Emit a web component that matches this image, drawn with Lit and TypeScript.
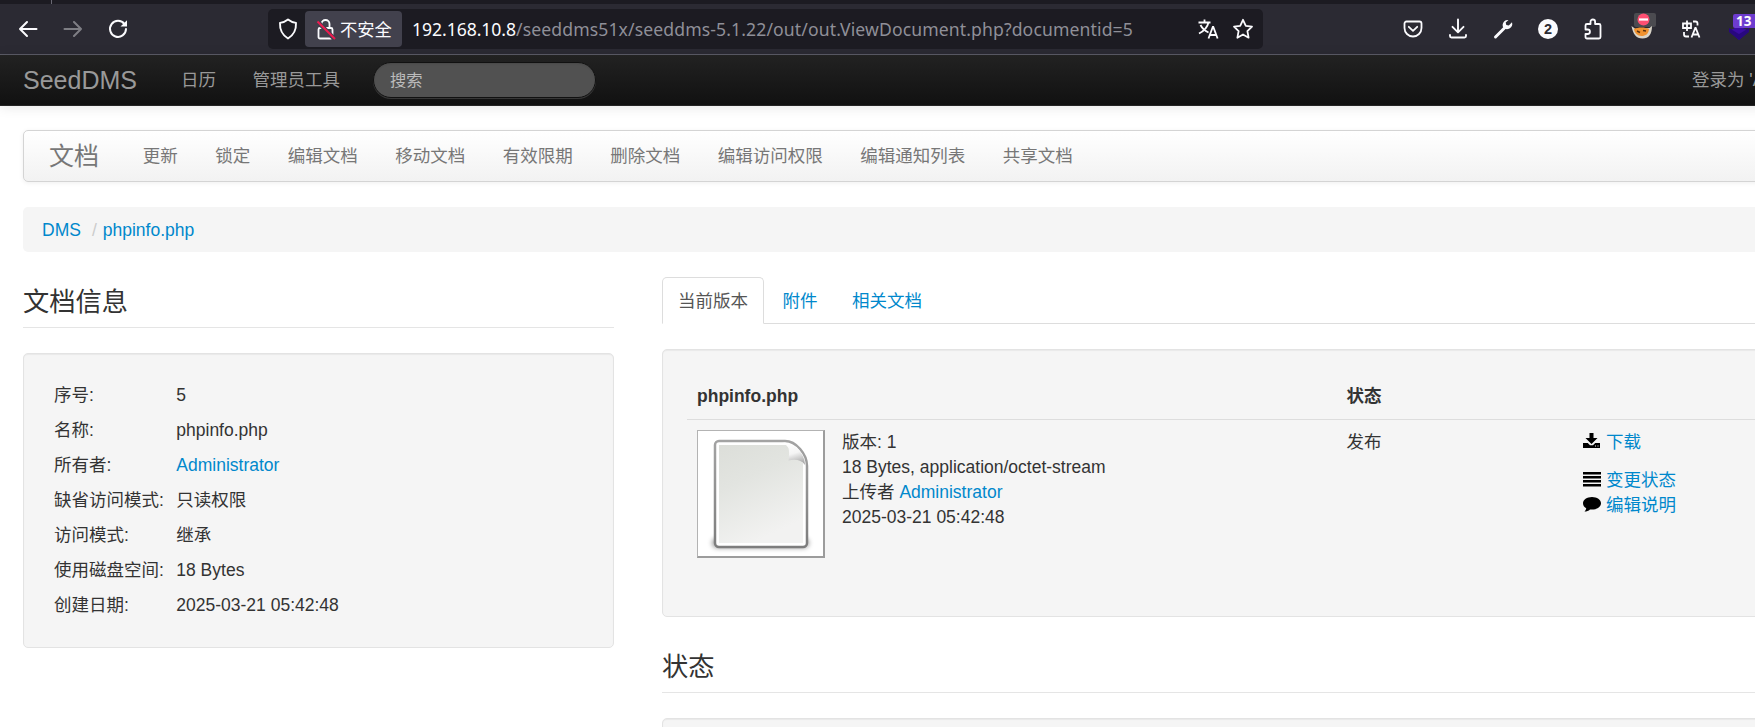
import { LitElement, html, css, svg } from "lit";
import { customElement } from "lit/decorators.js";

const baseFont = css`
  :host { display: block; font-family: "Liberation Sans", "Noto Sans CJK SC", sans-serif; font-size: 17.5px; line-height: 25px; color: #333; }
  * { box-sizing: border-box; }
  a { color: #0088cc; text-decoration: none; }
  svg { display: block; }
`;

@customElement("browser-bar")
class BrowserBar extends LitElement {
  static styles = [baseFont, css`
    :host { font-family: "Noto Sans", "Noto Sans CJK SC", sans-serif; color: #fbfbfe; }
    .tabs { height: 4px; background: #1c1b22; display: flex; }
    .sep { width: 1px; height: 4px; margin-left: 51px; background: #6a6974; }
    .bar { height: 51px; background: #2b2a33; border-bottom: 1px solid #5b5b66; display: flex; align-items: center; width: 1800px; }
    .nav { width: 268px; display: flex; align-items: center; gap: 21px; padding-left: 16px; }
    .dim { opacity: .4; }
    .url { width: 995px; height: 40px; border-radius: 5px; background: #1c1b22; display: flex; align-items: center; padding-left: 8px; }
    .chip { height: 36px; width: 97px; background: #42414d; border-radius: 4px; margin-left: 5px; display: flex; align-items: center; padding-left: 9px; gap: 1px; font-size: 17.3px; }
    .addr { margin-left: 10px; width: 777px; font-size: 17.6px; letter-spacing: .115px; color: #8f8f98; white-space: nowrap; }
    .host { color: #fbfbfe; letter-spacing: -.06px; }
    .end { display: flex; gap: 11px; margin-left: 7px; }
    .tools { margin-left: 138px; display: flex; align-items: center; gap: 21px; height: 50px; }
    .cat { margin-left: 2px; }
    .lang { margin-left: 2px; }
    .stack { margin-left: 2px; }
  `];
  render() {
    return html`
      <div class="tabs"><div class="sep"></div></div>
      <div class="bar">
        <div class="nav">
          <svg width="24" height="24" viewBox="0 0 24 24" fill="none" stroke="#fbfbfe" stroke-width="2" stroke-linecap="round" stroke-linejoin="round"><path d="M20.500 12H4M11 5l-7 7 7 7"/></svg>
          <svg class="dim" width="24" height="24" viewBox="0 0 24 24" fill="none" stroke="#fbfbfe" stroke-width="2" stroke-linecap="round" stroke-linejoin="round"><path d="M3.500 12H20M13 5l7 7-7 7"/></svg>
          <svg width="24" height="24" viewBox="0 0 24 24"><path d="M18.500 7.200A8 8 0 1 0 20 12" fill="none" stroke="#fbfbfe" stroke-width="2" stroke-linecap="round"/><path d="M21 3.200v6.300h-6.500z" fill="#fbfbfe"/></svg>
        </div>
        <div class="url">
          <svg width="24" height="24" viewBox="0 0 24 24" fill="none" stroke="#fbfbfe" stroke-width="1.900" stroke-linejoin="round"><path d="M12 2.500c2.500 2 5 3 8 3.400.3 6.600-2 12-8 15.600C6 17.900 3.700 12.500 4 5.900c3-.4 5.500-1.400 8-3.400z"/></svg>
          <div class="chip">
            <svg width="25" height="24" viewBox="0 0 25 24" fill="none"><path d="M6 11h11a1.500 1.500 0 0 1 1.500 1.500v7.500a1.500 1.500 0 0 1-1.500 1.500H6A1.500 1.500 0 0 1 4.500 20v-7.500A1.500 1.500 0 0 1 6 11z" stroke="#fbfbfe" stroke-width="1.800"/><path d="M7.500 11V7a4 4 0 0 1 8 0v4" stroke="#fbfbfe" stroke-width="1.800"/><path d="M3.500 4.500l17.500 18" stroke="#42414d" stroke-width="4.500"/><path d="M3.500 4.500l17.500 17.500" stroke="#ef1a50" stroke-width="2"/></svg>
            <span>不安全</span>
          </div>
          <div class="addr"><span class="host">192.168.10.8</span>/seeddms51x/seeddms-5.1.22/out/out.ViewDocument.php?documentid=5</div>
          <div class="end">
            <svg width="24" height="24" viewBox="0 0 24 24" fill="none" stroke="#fbfbfe" stroke-width="1.800"><path d="M2.500 5.500h12M8.500 2.500v3M4.500 8c2 4 5 6 8 7.500M12.500 5.500C11.500 10 8 14 3 16.500M12.500 21.500l4.300-11.500h.5l4.300 11.500M14 18h6"/></svg>
            <svg width="24" height="24" viewBox="0 0 24 24" fill="none" stroke="#fbfbfe" stroke-width="1.800" stroke-linejoin="round"><path d="M12 2.800l2.800 6 6.200.8-4.600 4.500 1.200 6.600L12 17.500l-5.600 3.200 1.200-6.600L3 9.600l6.200-.8z"/></svg>
          </div>
        </div>
        <div class="tools">
          <svg width="24" height="24" viewBox="0 0 24 24" fill="none" stroke="#fbfbfe" stroke-width="1.800" stroke-linecap="round" stroke-linejoin="round"><path d="M5.500 4.500h13a2 2 0 0 1 2 2V11a8.500 8.500 0 0 1-17 0V6.500a2 2 0 0 1 2-2zM7.800 9.800l4.200 4 4.200-4"/></svg>
          <svg width="24" height="24" viewBox="0 0 24 24" fill="none" stroke="#fbfbfe" stroke-width="1.900" stroke-linecap="round" stroke-linejoin="round"><path d="M12 2.500v12.500M6.500 9.800l5.500 5.500 5.500-5.500M4 18v1a1.500 1.500 0 0 0 1.500 1.500h13a1.500 1.500 0 0 0 1.500-1.500V18"/></svg>
          <svg width="24" height="24" viewBox="0 0 24 24"><path d="M4.500 20L14 10.500" stroke="#fbfbfe" stroke-width="3" stroke-linecap="round"/><path d="M17.500 3a5.200 5.200 0 0 0-5.500 7.100 5.200 5.200 0 0 0 9-4.800l-3.200 3.200-2.500-.6-.6-2.300z" fill="#fbfbfe"/></svg>
          <svg width="24" height="24" viewBox="0 0 24 24"><circle cx="12" cy="12" r="10" fill="#fbfbfe"/><text x="12" y="17" text-anchor="middle" font-size="14.500" font-weight="700" font-family="Liberation Sans" fill="#2b2a33">2</text></svg>
          <svg width="24" height="24" viewBox="0 0 24 24" fill="none" stroke="#fbfbfe" stroke-width="1.800" stroke-linejoin="round"><path d="M4.500 10.500V8.500A1.500 1.500 0 0 1 6 7h3.500V4.800a2.300 2.300 0 0 1 4.600 0V7H18a1.500 1.500 0 0 1 1.500 1.500V20a1.500 1.500 0 0 1-1.500 1.500H6A1.500 1.500 0 0 1 4.500 20v-3h2.200a2.200 2.200 0 0 0 0-4.500H4.500z"/></svg>
          <svg class="cat" width="28" height="32" viewBox="0 0 28 32"><rect x="6" y="0" width="22" height="14" rx="2" fill="#4b4b50"/><path d="M3.500 13l4 3 14-1 2.500-2c0 8-3 12.500-9.500 12.500S5 21 3.500 13z" fill="#d9d4c8"/><path d="M6 16c4-2 11-2 15 0-.5 5-3.500 7-7.500 7S6.500 20 6 16z" fill="#f0922f"/><path d="M9 18l3 1.500M15 17.500l3 .5" stroke="#5a3210" stroke-width="1.500"/><circle cx="15.500" cy="6.500" r="6" fill="#ff4f72"/><rect x="11" y="5.400" width="9" height="2.200" fill="#fff"/></svg>
          <svg class="lang" width="24" height="24" viewBox="0 0 24 24" fill="none" stroke="#fbfbfe" stroke-width="1.800"><path d="M4 6.500h8v4.500H4zM8 3.500v10.500M14 4.500h2.500a2 2 0 0 1 2 2V8.500M5 15v2.500a2 2 0 0 0 2 2h3M12.500 20.500l3.800-9.500h.4l3.800 9.500M14 17.500h5"/></svg>
          <svg class="stack" width="32" height="40" viewBox="0 0 32 40"><path d="M3 22l10-5 10 5-10 9z" fill="#3a0ca3"/><path d="M3 19l10 6 10-6v4l-10 8-10-8z" fill="#28087f"/><rect x="7" y="5" width="25" height="14" rx="2" fill="#6d3ccf"/><text x="10" y="17" font-size="13.500" font-weight="700" font-family="Noto Sans" fill="#fff">13</text></svg>
        </div>
      </div>`;
  }
}

@customElement("site-nav")
class SiteNav extends LitElement {
  static styles = [baseFont, css`
    .bar { height: 51px; width: 1900px; background: linear-gradient(#222, #111); border-bottom: 1px solid #252525; box-shadow: 0 1px 12px rgba(0,0,0,.1); display: flex; align-items: center; color: #999; }
    .brand { width: 158px; padding-left: 23px; font-size: 25px; }
    .item { margin-left: 23px; margin-right: 13.500px; }
    .search { margin-left: 19px; width: 223px; height: 36px; border-radius: 18px; background: #515151; border: 1px solid #111; box-shadow: inset 0 1px 2px rgba(0,0,0,.1), 0 1px 0 rgba(255,255,255,.15); padding: 5px 16.500px; font-size: 16.250px; color: #bbb; }
    .user { margin-left: 1096.500px; white-space: nowrap; }
  `];
  render() {
    return html`<div class="bar">
      <div class="brand">SeedDMS</div>
      <div class="item">日历</div>
      <div class="item">管理员工具</div>
      <div class="search">搜索</div>
      <div class="user">登录为 'Administrator'</div>
    </div>`;
  }
}

@customElement("document-menu")
class DocumentMenu extends LitElement {
  static styles = [baseFont, css`
    .bar { height: 52px; border: 1px solid #d4d4d4; border-radius: 5px; background: linear-gradient(#fff, #f2f2f2); box-shadow: 0 1px 5px rgba(0,0,0,.065); display: flex; align-items: center; color: #777; white-space: nowrap; }
    .brand { font-size: 25px; padding: 0 25px; }
    .item { padding: 0 18.750px; }
  `];
  items = ["更新", "锁定", "编辑文档", "移动文档", "有效限期", "删除文档", "编辑访问权限", "编辑通知列表", "共享文档"];
  render() {
    return html`<div class="bar"><div class="brand">文档</div>${this.items.map(i => html`<div class="item">${i}</div>`)}</div>`;
  }
}

@customElement("document-info")
class DocumentInfo extends LitElement {
  static styles = [baseFont, css`
    .legend { height: 51px; border-bottom: 1px solid #e5e5e5; font-size: 26.250px; line-height: 51px; }
    .well { margin-top: 25px; background: #f5f5f5; border: 1px solid #e3e3e3; border-radius: 5px; box-shadow: inset 0 1px 1px rgba(0,0,0,.05); padding: 24px 25px; height: 295px; }
    .row { display: grid; grid-template-columns: 122.300px 1fr; padding: 5px; }
  `];
  rows = [["序号:", "5"], ["名称:", "phpinfo.php"], ["所有者:", html`<a>Administrator</a>`], ["缺省访问模式:", "只读权限"], ["访问模式:", "继承"], ["使用磁盘空间:", "18 Bytes"], ["创建日期:", "2025-03-21 05:42:48"]];
  render() {
    return html`<div class="legend">文档信息</div>
      <div class="well">${this.rows.map(r => html`<div class="row"><span>${r[0]}</span><span>${r[1]}</span></div>`)}</div>`;
  }
}

const page = svg`
  <defs>
    <linearGradient id="sheet" x1="0" y1="0" x2=".4" y2="1"><stop offset="0" stop-color="#dcded9"/><stop offset=".4" stop-color="#e2e4e0"/><stop offset="1" stop-color="#f2f2f1"/></linearGradient>
    <linearGradient id="edge" x1="0" y1="0" x2="0" y2="1"><stop offset="0" stop-color="#a3a3a3"/><stop offset="1" stop-color="#7d7d7d"/></linearGradient>
    <linearGradient id="curl" x1=".3" y1="0" x2=".6" y2="1"><stop offset="0" stop-color="#fff"/><stop offset=".5" stop-color="#f4f4f4"/><stop offset="1" stop-color="#a8a8a8"/></linearGradient>
    <filter id="soft" x="-20%" y="-100%" width="140%" height="300%"><feGaussianBlur stdDeviation="2.500"/></filter>
  </defs>
  <rect x="14" y="107" width="97" height="10" rx="5" fill="#000" opacity=".4" filter="url(#soft)"/>
  <path d="M21 10H87C98 10 109 23 109 35V112a4 4 0 0 1-4 4H21a4 4 0 0 1-4-4V14a4 4 0 0 1 4-4z" fill="#fff" stroke="url(#edge)" stroke-width="2.500"/>
  <path d="M21 14H88l17 18V112H21z" fill="url(#sheet)"/>
  <path d="M84 11.500c7 0 8 8 6.500 18 7-1.500 13-.5 16.500 4.500C107 22 96 11.500 84 11.500z" fill="url(#curl)"/>`;

@customElement("document-version")
class DocumentVersion extends LitElement {
  static styles = [baseFont, css`
    .tabs { display: flex; height: 47px; border-bottom: 1px solid #ddd; }
    .tab { padding: 11px 15px; margin-right: 2.500px; height: 46px; border: 1px solid transparent; line-height: 25px; color: #0088cc; }
    .active { height: 47px; border-color: #ddd; border-bottom-color: #fff; border-radius: 5px 5px 0 0; background: #fff; color: #555; }
    .well { margin-top: 25px; background: #f5f5f5; border: 1px solid #e3e3e3; border-radius: 5px; box-shadow: inset 0 1px 1px rgba(0,0,0,.05); padding: 24px; height: 268px; }
    .row { display: grid; grid-template-columns: 145px 504.500px 236.500px 1fr; padding: 10px; }
    .head { font-weight: 700; padding-bottom: 10px; border-bottom: 1px solid #ddd; height: 46px; }
    .name { grid-column: span 2; }
    .thumb { width: 128px; height: 128px; background: #fff; border: solid #b3b3b3; border-width: 1px 2px 2px 1px; border-right-color: #9c9c9c; border-bottom-color: #9c9c9c; }
    .body { padding-top: 10px; }
    .act { display: flex; align-items: flex-start; gap: 5px; height: 25px; }
    .act svg { margin-top: 2px; }
    .gap { margin-bottom: 12.500px; }
    .legend { margin-top: 25px; height: 51px; border-bottom: 1px solid #e5e5e5; font-size: 26.250px; line-height: 51px; }
  `];
  render() {
    return html`
      <div class="tabs"><div class="tab active">当前版本</div><div class="tab">附件</div><div class="tab">相关文档</div></div>
      <div class="well">
        <div class="row head"><span class="name">phpinfo.php</span><span>状态</span></div>
        <div class="row body">
          <div class="thumb"><svg width="125" height="125" viewBox="0 0 125 125">${page}</svg></div>
          <div><div>版本: 1</div><div>18 Bytes, application/octet-stream</div><div>上传者 <a>Administrator</a></div><div>2025-03-21 05:42:48</div></div>
          <div>发布</div>
          <div>
            <div class="act gap"><svg width="18" height="18" viewBox="0 0 18 18"><path d="M6.500 1h4v5h4L8.500 12 2.500 6h4z"/><path d="M0 11h4.800l2.200 2.200h3L12.200 11H17v5H0zM12 13.500v1h1v-1zM14.500 13.500v1h1v-1z" fill-rule="evenodd"/></svg><a>下载</a></div>
            <div class="act"><svg width="18" height="18" viewBox="0 0 18 18"><path d="M0 2h18v2.500H0zM0 6h18v2.500H0zM0 10h18v2.500H0zM0 14h18v2.500H0z"/></svg><a>变更状态</a></div>
            <div class="act"><svg width="18" height="18" viewBox="0 0 18 18"><path d="M9 2c5 0 9 2.800 9 6.300s-4 6.300-9 6.300c-.7 0-1.400 0-2-.2-1.500 1.400-3.300 2.100-5.500 2.100 1-1 1.600-2 1.700-3.200C1.200 12.200 0 10.400 0 8.300 0 4.800 4 2 9 2z"/></svg><a>编辑说明</a></div>
          </div>
        </div>
      </div>
      <div class="legend">状态</div>
      <div class="well"></div>`;
  }
}

@customElement("app-root")
class AppRoot extends LitElement {
  static styles = [baseFont, css`
    :host { height: 727px; overflow: hidden; background: #fff; }
    .page { width: 1872px; padding: 24px 23px 0; }
    .crumbs { margin: 25px 0 25px; height: 45px; background: #f5f5f5; border-radius: 5px; display: flex; align-items: center; padding: 1px 0 0 19px; }
    .slash { color: #ccc; padding: 0 6px 0 11px; }
    .cols { display: flex; gap: 48px; }
    .left { width: 591px; flex: none; }
    .right { flex: 1; }
  `];
  render() {
    return html`
      <browser-bar></browser-bar>
      <site-nav></site-nav>
      <div class="page">
        <document-menu></document-menu>
        <div class="crumbs"><a>DMS</a><span class="slash">/</span><a>phpinfo.php</a></div>
        <div class="cols">
          <document-info class="left"></document-info>
          <document-version class="right"></document-version>
        </div>
      </div>`;
  }
}
